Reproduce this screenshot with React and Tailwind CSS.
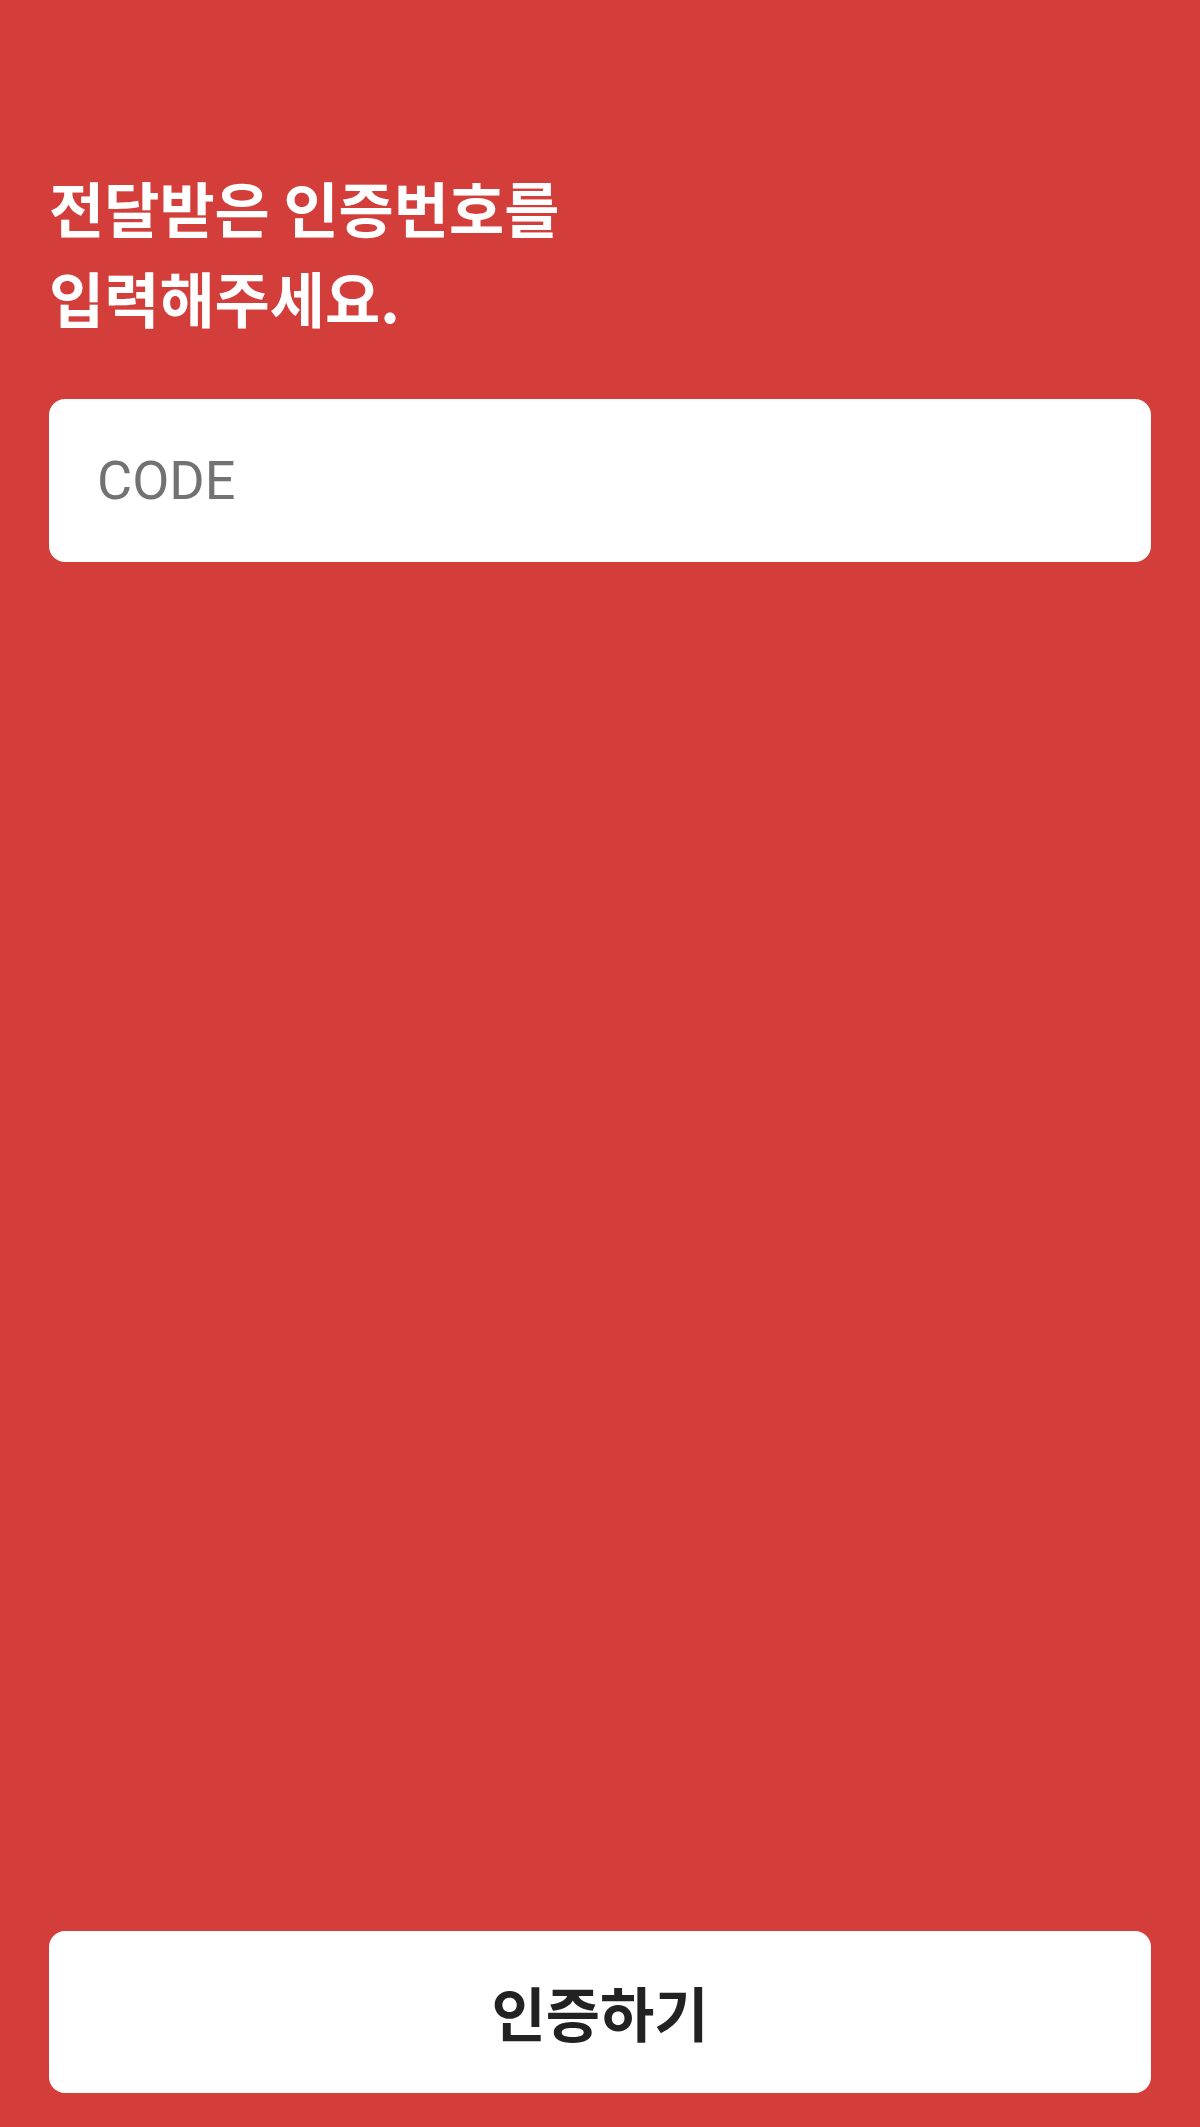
export default function App() {
  return (
    <div
      className="flex h-[2127px] w-full flex-col bg-[#d33d3a] px-[49px] pb-[34px] pt-[162px]"
      style={{ fontFamily: '"Noto Sans CJK KR", "Noto Sans", sans-serif' }}
    >
      <h1 className="text-[60px] font-bold leading-[90px] text-white">
        전달받은 인증번호를
        <br />
        입력해주세요.
      </h1>
      <input
        type="text"
        placeholder="CODE"
        className="mt-[57px] h-[163px] w-full rounded-[16px] bg-white px-[48px] text-[54px] text-[#222] outline-none placeholder:text-[#727272]"
        style={{ fontFamily: 'Roboto, "Noto Sans CJK KR", sans-serif' }}
      />
      <div className="flex-1" />
      <button className="flex h-[162px] w-full items-center justify-center rounded-[16px] bg-white text-[59px] font-bold text-[#222]">
        인증하기
      </button>
    </div>
  );
}
